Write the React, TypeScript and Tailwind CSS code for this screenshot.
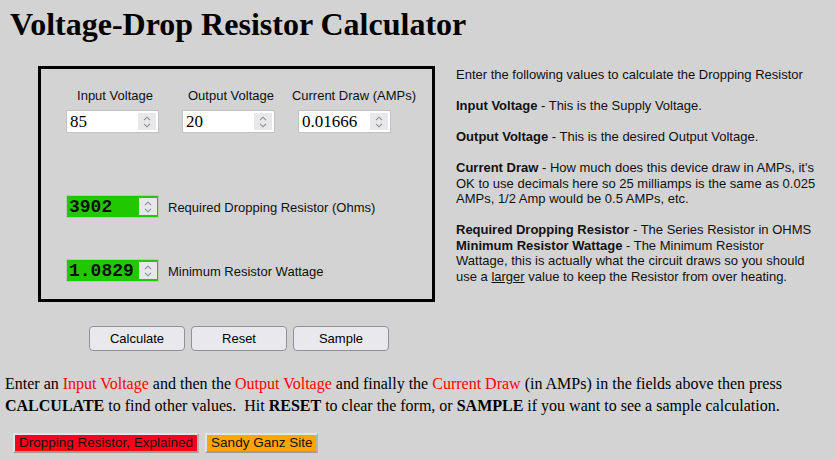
import React from "react";

const serif = "font-['Liberation_Serif','Times_New_Roman',serif]";
const sans = "font-['Liberation_Sans',Arial,Helvetica,sans-serif]";
const mono = "font-['Liberation_Mono','Courier_New',monospace]";

// little up/down arrows of a number field
const Spinner = () => (
  <span className="flex h-[17px] w-[18px] flex-col items-center justify-center gap-[2px] bg-[#e8e8ea]">
    <svg width="8" height="5" viewBox="0 0 8 5" fill="none">
      <path d="M1 4.2 L4 1.2 L7 4.2" stroke="#8a8a8e" strokeWidth="1.1" />
    </svg>
    <svg width="8" height="5" viewBox="0 0 8 5" fill="none">
      <path d="M1 0.8 L4 3.8 L7 0.8" stroke="#8a8a8e" strokeWidth="1.1" />
    </svg>
  </span>
);

const NumberField = ({ value, className = "" }: { value: string; className?: string }) => (
  <div className={`flex h-[23px] w-[93px] items-center border border-[#c2c2c2] bg-white pl-[3px] pr-[2px] ${className}`}>
    <span className={`${serif} flex-1 text-[17px] leading-none text-black`}>{value}</span>
    <Spinner />
  </div>
);

const ResultField = ({ value }: { value: string }) => (
  <div className="flex h-[23px] w-[93px] shrink-0 items-center overflow-hidden border border-[#b9c7b4] bg-[#21c800] pl-[2px] pr-[1px]">
    <span className={`${mono} flex-1 whitespace-nowrap text-[18px] font-bold leading-none text-[#111]`}>{value}</span>
    <Spinner />
  </div>
);

const InputColumn = ({ label, value, width, offset }: { label: string; value: string; width: string; offset: string }) => (
  <div className={`flex flex-col ${width}`}>
    <div className="text-center text-[13px] leading-[15px] text-[#111]">{label}</div>
    <NumberField value={value} className={`mt-[7px] ${offset}`} />
  </div>
);

const HelpText = () => (
  <div className={`${sans} pt-[1px] text-[13px] leading-[15.5px] text-[#111] whitespace-nowrap`}>
    <p>Enter the following values to calculate the Dropping Resistor</p>
    <p className="mt-[15.5px]">
      <b>Input Voltage</b> - This is the Supply Voltage.
    </p>
    <p className="mt-[15.5px]">
      <b>Output Voltage</b> - This is the desired Output Voltage.
    </p>
    <p className="mt-[15.5px]">
      <b>Current Draw</b> - How much does this device draw in AMPs, it's
      <br />
      OK to use decimals here so 25 milliamps is the same as 0.025
      <br />
      AMPs, 1/2 Amp would be 0.5 AMPs, etc.
    </p>
    <p className="mt-[15.5px]">
      <b>Required Dropping Resistor</b> - The Series Resistor in OHMS
      <br />
      <b>Minimum Resistor Wattage</b> - The Minimum Resistor
      <br />
      Wattage, this is actually what the circuit draws so you should
      <br />
      use a <u>larger</u> value to keep the Resistor from over heating.
    </p>
  </div>
);

const FormButton = ({ children }: { children: React.ReactNode }) => (
  <button className="h-[25px] w-[96px] rounded-[4px] border border-[#8f8f9d] bg-[#e9e9ed] text-[13px] text-black">
    {children}
  </button>
);

const LinkButton = ({ children, bg }: { children: React.ReactNode; bg: string }) => (
  <a
    href="#"
    className={`${bg} flex h-[20px] items-center border-2 border-t-[#e4e4e4] border-l-[#e4e4e4] border-b-[#9c9c9c] border-r-[#b4b4b4] px-[4px] text-[13.5px] leading-none text-[#111]`}
  >
    {children}
  </a>
);

export default function App() {
  return (
    <div className={`${sans} min-h-[460px] w-full bg-[#d3d3d3]`}>
      <h1 className={`${serif} pl-[10px] pt-[6px] text-[32px] font-bold leading-[37px] text-black`}>
        Voltage-Drop Resistor Calculator
      </h1>

      <div className="mt-[23px] flex">
        {/* calculator box */}
        <div className="ml-[38px] h-[236px] w-[397px] shrink-0 border-[3px] border-black">
          <div className="flex pl-[25px] pt-[19px]">
            <InputColumn label="Input Voltage" value="85" width="w-[98px]" offset="" />
            <div className="w-[18px]" />
            <InputColumn label="Output Voltage" value="20" width="w-[98px]" offset="" />
            <div className="w-[11px]" />
            <InputColumn label="Current Draw (AMPs)" value="0.01666" width="w-[126px]" offset="ml-[7px]" />
          </div>

          <div className="mt-[62px] flex items-center pl-[25px]">
            <ResultField value="3902" />
            <span className="ml-[9px] mt-[2px] text-[13px] text-[#111]">Required Dropping Resistor (Ohms)</span>
          </div>
          <div className="mt-[41px] flex items-center pl-[25px]">
            <ResultField value="1.0829" />
            <span className="ml-[9px] mt-[2px] text-[13px] text-[#111]">Minimum Resistor Wattage</span>
          </div>
        </div>

        <div className="ml-[21px]">
          <HelpText />
        </div>
      </div>

      <div className="ml-[89px] mt-[24px] flex gap-[6px]">
        <FormButton>Calculate</FormButton>
        <FormButton>Reset</FormButton>
        <FormButton>Sample</FormButton>
      </div>

      <p className={`${serif} mt-[22px] pl-[5px] text-[16px] leading-[22px] text-black`}>
        Enter an <span className="text-[#ff0000]">Input Voltage</span> and then the{" "}
        <span className="text-[#ff0000]">Output Voltage</span> and finally the{" "}
        <span className="text-[#ff0000]">Current Draw</span> (in AMPs) in the fields above then press
        <br />
        <b>CALCULATE</b> to find other values.&nbsp; Hit <b>RESET</b> to clear the form, or <b>SAMPLE</b> if you want to
        see a sample calculation.
      </p>

      <div className="ml-[13px] mt-[16px] flex gap-[6px] pb-[8px]">
        <LinkButton bg="bg-[#ff0019]">Dropping Resistor, Explained</LinkButton>
        <LinkButton bg="bg-[#ffa500]">Sandy Ganz Site</LinkButton>
      </div>
    </div>
  );
}
